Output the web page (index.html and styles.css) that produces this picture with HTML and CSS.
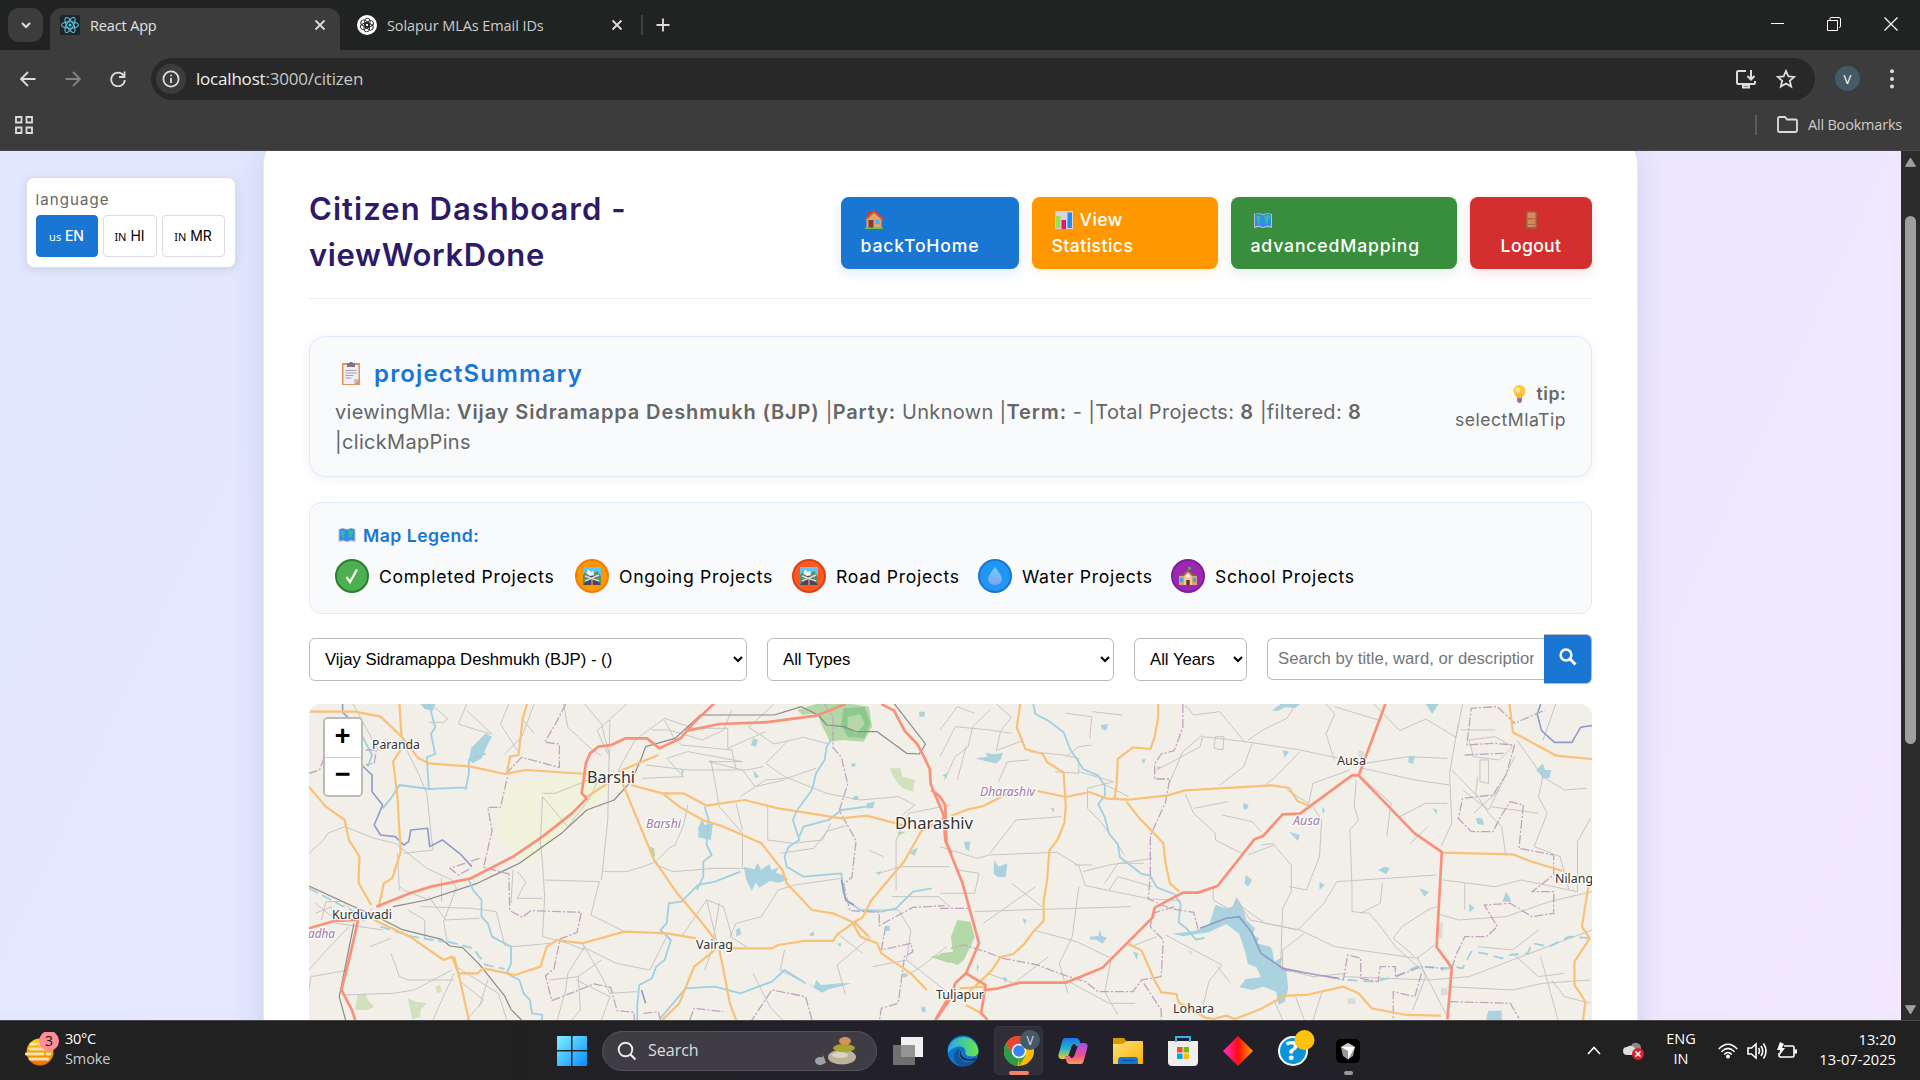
FILE: index.html
```html
<!DOCTYPE html>
<html lang="en">
<head>
<meta charset="utf-8">
<title>React App</title>
<link rel="stylesheet" href="styles.css">
</head>
<body>
<svg class="defs" aria-hidden="true">
  <defs>
    <linearGradient id="win" x1="0" y1="0" x2="1" y2="1"><stop offset="0" stop-color="#7df3fd"/><stop offset="1" stop-color="#0a8bff"/></linearGradient>
    <linearGradient id="sun" x1="0" y1="0" x2="0" y2="1"><stop offset="0" stop-color="#ffd500"/><stop offset="1" stop-color="#f06a00"/></linearGradient>
    <linearGradient id="edgeTop" x1="0" y1="0" x2="1" y2="0"><stop offset="0" stop-color="#28a8e8"/><stop offset="1" stop-color="#68e848"/></linearGradient>
    <linearGradient id="copA" x1="0" y1="0" x2="0" y2="1"><stop offset="0" stop-color="#1c74e8"/><stop offset=".5" stop-color="#22b4c8"/><stop offset="1" stop-color="#f0d030"/></linearGradient>
    <linearGradient id="copB" x1="0" y1="0" x2="0" y2="1"><stop offset="0" stop-color="#a050f0"/><stop offset=".6" stop-color="#f05090"/><stop offset="1" stop-color="#f8a050"/></linearGradient>
    <linearGradient id="dia" x1="0" y1="0" x2="1" y2="0"><stop offset="0" stop-color="#ff30d0"/><stop offset=".5" stop-color="#ff0c10"/><stop offset="1" stop-color="#ffa000"/></linearGradient>
    <linearGradient id="drop" x1="0" y1="0" x2="0" y2="1"><stop offset="0" stop-color="#6fd0fa"/><stop offset="1" stop-color="#7fa0f8"/></linearGradient>
    <linearGradient id="fold" x1="0" y1="0" x2="1" y2="1"><stop offset="0" stop-color="#ffe07a"/><stop offset="1" stop-color="#f8b400"/></linearGradient>
    <symbol id="worldmap" viewBox="0 0 18 16"><path d="M0 1l4.500-1L9 1l4.500-1L18 1v14l-4.500-1L9 15l-4.500-1L0 15z" fill="#c3b6d6"/><path d="M1 1.500l3.500-1L9 2l4.500-1.500L17 1.500v12l-3.500-1L9 14l-4.500-1.500L1 13.500z" fill="#2f8df0"/><path d="M2 3l4 0 1 2-2 2 1 4-2-1-1-4zM10 3l5-1 1 3-2 1v4l-2 1-1-4z" fill="#35c284"/></symbol>
    <symbol id="road" viewBox="0 0 18 18"><path d="M0 0h18v18H0z" fill="#5cc6f5"/><path d="M0 8l5-6 5 5 4-3 4 5v9H0z" fill="#5e8f6a"/><path d="M5 2l3 3 2-1 1 4-4 1-4-3z" fill="#eef6f8"/><path d="M0 18l7-9h4l7 9z" fill="#4a4560"/><path d="M8.500 12h1v6h-1z" fill="#ffca28"/><path d="M2 9l14 5M16 8L2 14" stroke="#ddd" stroke-width="1.400"/></symbol>
  </defs>
</svg>

<header class="browser">
  <div class="tabstrip">
    <button class="tab-search"><svg width="35" height="34" viewBox="0 0 35 34"><path d="M14 15l4 4 4-4" class="ico w2"/></svg></button>
    <div class="tab active">
      <svg class="favicon" width="20" height="20" viewBox="0 0 20 20"><rect width="20" height="20" rx="2" fill="#20232a"/><g fill="none" stroke="#58c4dc" stroke-width="1.100"><ellipse cx="10" cy="10" rx="8.500" ry="3.300"/><ellipse cx="10" cy="10" rx="8.500" ry="3.300" transform="rotate(60 10 10)"/><ellipse cx="10" cy="10" rx="8.500" ry="3.300" transform="rotate(120 10 10)"/></g><circle cx="10" cy="10" r="1.500" fill="#58c4dc"/></svg>
      <span class="tab-title t1">React App</span>
      <svg class="close" width="12" height="12" viewBox="0 0 12 12"><path d="M1.500 1.500l9 9M10.500 1.500l-9 9" class="ico"/></svg>
    </div>
    <div class="tab second">
      <svg class="favicon" width="20" height="20" viewBox="0 0 20 20"><circle cx="10" cy="10" r="10" fill="#fff"/><g fill="none" stroke="#222" stroke-width=".9"><rect x="7.600" y="3.200" width="5.400" height="8.500" rx="2.700"/><rect x="7.600" y="3.200" width="5.400" height="8.500" rx="2.700" transform="rotate(60 10 10)"/><rect x="7.600" y="3.200" width="5.400" height="8.500" rx="2.700" transform="rotate(120 10 10)"/><rect x="7.600" y="3.200" width="5.400" height="8.500" rx="2.700" transform="rotate(180 10 10)"/><rect x="7.600" y="3.200" width="5.400" height="8.500" rx="2.700" transform="rotate(240 10 10)"/><rect x="7.600" y="3.200" width="5.400" height="8.500" rx="2.700" transform="rotate(300 10 10)"/></g></svg>
      <span class="tab-title t2">Solapur MLAs Email IDs</span>
      <svg class="close" width="12" height="12" viewBox="0 0 12 12"><path d="M1.500 1.500l9 9M10.500 1.500l-9 9" class="ico"/></svg>
    </div>
    <span class="tab-sep"></span>
    <svg class="new-tab" width="14" height="14" viewBox="0 0 14 14"><path d="M7 .5v13M.5 7h13" class="ico"/></svg>
    <div class="window-buttons">
      <svg width="14" height="14" viewBox="0 0 14 14"><path d="M1 6.500h13" stroke="#fff"/></svg>
      <svg width="14" height="14" viewBox="0 0 14 14"><path d="M.5 3.500h10v10H.500zM3 3V1.500q0-1 1-1h8q1.500 0 1.500 1.500v7.500q0 1-1.500 1" fill="none" stroke="#fff"/></svg>
      <svg width="14" height="14" viewBox="0 0 14 14"><path d="M.5.500l13 13M13.500.500l-13 13" stroke="#fff" stroke-width="1.200"/></svg>
    </div>
  </div>
  <div class="toolbar">
    <svg class="nav" width="16" height="16" viewBox="0 0 16 16"><path d="M15.500 8H1.500M8 1L1 8l7 7" class="ico"/></svg>
    <svg class="nav dim" width="16" height="16" viewBox="0 0 16 16"><path d="M.5 8h14M8 1l7 7-7 7" class="ico"/></svg>
    <svg class="nav" width="16" height="16" viewBox="0 0 16 16"><path d="M13.500 4.500A6.800 6.800 0 1 0 14.800 9M14.500.500v5.500H9" class="ico"/></svg>
    <div class="omnibox">
      <span class="info"><svg width="18" height="18" viewBox="0 0 18 18"><circle cx="9" cy="9" r="7.600" class="ico"/><path d="M9 8v5M9 4.700v1.600" class="ico"/></svg></span>
      <span class="url">localhost<span>:3000/citizen</span></span>
      <svg class="install" width="22" height="20" viewBox="0 0 22 20"><path d="M11 2H3.200Q2 2 2 3.200v10.600Q2 15 3.200 15h15.600q1.200 0 1.200-1.200V12M16 1v9M12.500 7l3.500 3.500L19.500 7M8 16h6v2.500H8z" class="ico w2"/></svg>
      <svg class="star" width="20" height="20" viewBox="0 0 20 20"><path d="M10 2l2.400 5.400 5.900.5-4.500 3.900 1.400 5.800L10 14.500l-5.200 3.100 1.400-5.800-4.500-3.900 5.900-.5z" class="ico"/></svg>
    </div>
    <span class="avatar">V</span>
    <svg class="kebab" width="4" height="20" viewBox="0 0 4 20"><g fill="#ddd"><circle cx="2" cy="2.200" r="2"/><circle cx="2" cy="10" r="2"/><circle cx="2" cy="17.500" r="2"/></g></svg>
  </div>
  <div class="bookmarks">
    <svg width="18" height="18" viewBox="0 0 18 18"><path d="M1 1h5.500v5.500H1zM11.500 1H17v5.500h-5.500zM1 11.500h5.500V17H1zM11.500 11.500H17V17h-5.500z" class="ico"/></svg>
    <span class="bm-sep"></span>
    <svg width="21" height="17" viewBox="0 0 21 17"><path d="M1 14.500V2.500Q1 1 2.500 1H8l2 2.500h8.500Q20 3.500 20 5v9.500q0 1.500-1.500 1.500h-16Q1 16 1 14.500z" class="ico"/></svg>
    <span class="bm-text">All Bookmarks</span>
  </div>
</header>

<main class="page">
  <aside class="language">
    <div class="language-label">language</div>
    <div class="language-row">
      <button class="lang on"><small>us</small> EN</button>
      <button class="lang hi"><small>IN</small> HI</button>
      <button class="lang mr"><small>IN</small> MR</button>
    </div>
  </aside>

  <section class="dashboard">
    <div class="head">
      <h1><span>Citizen Dashboard -</span><br><span class="h1b">viewWorkDone</span></h1>
      <div class="actions">
        <button class="btn blue"><svg class="emo" width="20" height="19" viewBox="0 0 20 19"><path d="M4 2h3v5H4z" fill="#b34a2e"/><path d="M2.500 8.500L10 2l7.500 6.500V18h-15z" fill="#e3a36d"/><path d="M0 9.500L10 0l10 9.500-1.500 1L10 3 1.500 10.500z" fill="#e64a2f"/><path d="M4.500 10h5v8h-5z" fill="#7a4034"/><path d="M11.500 10h4v4h-4z" fill="#39b6f2"/><path d="M1 17.500h18v1.500H1z" fill="#6cc04a"/></svg><br><span>backToHome</span></button>
        <button class="btn orange-btn"><svg class="emo" width="18" height="18" viewBox="0 0 18 18"><path d="M0 0h18v18H0z" fill="#d9d3e3"/><path d="M1 5h4.500v12H1z" fill="#9be04d"/><path d="M6.500 9H11v9H6.500z" fill="#e0177b"/><path d="M12.500 1.500H17V17h-4.500z" fill="#2489e8"/></svg><span>View</span><br><span>Statistics</span></button>
        <button class="btn green"><svg class="emo" width="18" height="16"><use href="#worldmap"/></svg><br><span>advancedMapping</span></button>
        <button class="btn red-btn"><svg class="emo door" width="11" height="18" viewBox="0 0 11 18"><path d="M0 0h11v18H0z" fill="#a4583e"/><path d="M1.500 1.500h8V16h-8z" fill="#d08a5e"/><path d="M2 7h7v1.500H2zM2 13h7v1H2z" fill="#b86840"/></svg><br><span>Logout</span></button>
      </div>
    </div>

    <div class="summary">
      <div class="summary-main">
        <h2><svg width="18" height="23" viewBox="0 0 18 23"><path d="M0 1h18v22H0z" fill="#dd965c"/><path d="M1.500 3h15v14l-4 5H1.500z" fill="#f1edf6"/><path d="M12 22v-5h5z" fill="#c8bfd8"/><path d="M5 1h2q2-2.500 4 0h2v4H5z" fill="#7d7488"/><path d="M3.500 8.500h11M3.500 11h11M3.500 13.500h8M3.500 16h6" stroke="#a79bb5"/></svg><span>projectSummary</span></h2>
        <p>viewingMla: <b>Vijay Sidramappa Deshmukh (BJP)</b> |<b>Party:</b> Unknown |<b>Term:</b> - |Total Projects: <b>8</b> |filtered: <b>8</b><br>|clickMapPins</p>
      </div>
      <div class="tip">
        <div><svg width="13" height="18" viewBox="0 0 13 18"><circle cx="6.500" cy="6" r="6" fill="#ffc83d"/><path d="M2 9h9l-2 4H4z" fill="#ffb42e"/><circle cx="5" cy="5" r="2.500" fill="#ffe79a"/><path d="M4 13h5v3l-1.500 2h-2L4 16z" fill="#98769c"/></svg><b>tip:</b></div>
        <div>selectMlaTip</div>
      </div>
    </div>

    <div class="legend">
      <div class="legend-title"><svg width="18" height="15"><use href="#worldmap"/></svg><span>Map Legend:</span></div>
      <div class="legend-row">
        <div class="key"><i class="dot done"><svg width="14" height="16" viewBox="0 0 14 16"><path d="M1.500 9l3.500 5L12 1.500" fill="none" stroke="#fff" stroke-width="2.200"/></svg></i><span class="k1">Completed Projects</span></div>
        <div class="key"><i class="dot ongoing"><svg width="18" height="18"><use href="#road"/></svg></i><span class="k2">Ongoing Projects</span></div>
        <div class="key"><i class="dot roads"><svg width="18" height="18"><use href="#road"/></svg></i><span class="k3">Road Projects</span></div>
        <div class="key"><i class="dot water"><svg width="14" height="18" viewBox="0 0 14 18"><path d="M7 0Q14 9 14 12a7 6 0 0 1-14 0Q0 9 7 0z" fill="url(#drop)"/></svg></i><span class="k4">Water Projects</span></div>
        <div class="key"><i class="dot school"><svg width="18" height="18" viewBox="0 0 18 18"><path d="M9 0h3v2.500H9.500V5H9z" fill="#43b84c"/><path d="M0 9h18v9H0z" fill="#d9a273"/><path d="M5 7l4-4 4 4v11H5z" fill="#f6c794"/><path d="M0 9l2-2h3l4-4.500L13 7h3l2 2h-5L9 5 5 9z" fill="#8d5b52"/><path d="M1 11h3v4H1zM14 11h3v4h-3z" fill="#39a6e8"/><path d="M7.300 13h3.400v5H7.300z" fill="#59393c"/><circle cx="9" cy="9" r="1.500" fill="#fff"/></svg></i><span class="k5">School Projects</span></div>
      </div>
    </div>

    <div class="filters">
      <select class="f-mla"><option>Vijay Sidramappa Deshmukh (BJP) - ()</option></select>
      <select class="f-type"><option>All Types</option></select>
      <select class="f-year"><option>All Years</option></select>
      <div class="search"><input type="text" placeholder="Search by title, ward, or description"><button><svg width="18" height="18" viewBox="0 0 18 18"><circle cx="7" cy="7" r="5.400" fill="none" stroke="#fff" stroke-width="2.500"/><path d="M11 11l5.500 5.500" stroke="#fff" stroke-width="2.900"/></svg></button></div>
    </div>

    <div class="map">
      <svg class="tiles" width="1283" height="316" viewBox="0 0 1283 316">
        <rect width="1283" height="316" fill="#f2efe9"/>
        <g class="layer" transform="translate(-19 -14) scale(.4209 .3333)">
          <path class="sand" d="M498 288L700 250 760 300 710 370 640 440 590 510 560 520 490 430z"/>
          <path class="wood" d="M1205 60l50-20h70l50 10 8 60-20 45-50-5-30 5-20-50-10-35-35 5z"/>
          <path class="wood2" d="M1315 55l50-5 14 50-14 45-40-5-15-35z"/><path class="wood" d="M1325 80l30-8 10 30-20 30-20-20z"/>
          <path class="park" d="M1425 235l25 0 5 25 30 10-5 35-25-10-20-30zM160 915l20-5 5 20 15 20-15 10-30 0zM280 925l20 10 25 5-15 20 0 22-20 5-5-30zM345 890l12-5 3 20-10 5z"/>
          <path class="wood" d="M1520 800l48-12v32zM855 470l10 5 3 25-10-5zM1442 425h22l-15 10z"/>
          <path class="lake" d="M310 42h35l-5 20-20-5zM465 130l15 10-15 35-10 30-20 15-10-10 5-35 15-20zM1100 145l12 5-5 20-12-5zM930 235l6 10-5 15zM1100 240l15 20-10 5zM980 385l5 20 20-5-5 50-30-8 0-30zM1078 530l25 8 8-20 8 22 20-18 5 18 18-8-8 16 18 8 12 14-24 8-20-5-25 20-8-15-10 25-12-30zM1060 720l8-8 4 20-12 8zM1230 880l15 10 5-20 12 15 45-5 28 0-30 10-25 8-15 10-15-10zM1370 340l20-5-5 20-15 0zM1480 480l12-8-8 25-12-8zM1495 65l14 0-2 15-12 0zM1335 220l8 0 0 10-10 0zM1340 318l10 0 0 12-12 0zM1300 760l10 0-3 12zM1235 730l10-5 0 12-10 0zM1500 950l10 0 0 18-10-4zM1390 548l15-5-5 12zM1415 708l10 0 0 15-10 0zM1455 850l10 0 0 12-10 0z"/>
          <path class="minor" d="M150 42l60 140 50-30M45 490l35-40 10-20 40-20 70 35 50 15 75 75 60 35 10 25-30 100 10 70M265 150l40 100 20 60 10 120 5 50-70 10M335 42l40 45-10 10h-35M420 42l-20 60 50 20 30 10-60-70M520 42l-20 60 40 80M550 85l30 45M580 42l-30 100-40 50M650 42l10 70 60 70 20 15M700 42l40 60 20 100M800 42l-70 80 25 70M780 240l40-90 70-65 70 30 80 0 0 60 90-50M860 120l40 0 80 30 50-30 20-60M890 90l20 50 20 25 120 15 10 60M835 265l100-5-40-55 50-20 130 30-80 0 80 25 30 50 70-20M845 225l100 15 140 0 40-10M600 310l30 0 80-40 30-10M600 320l60 90 50-80 30-80M600 320l-5 140 5 60 5 100-5 120 60 20 40 20M605 570l130 5-20 100 80 50M745 545l55 0 50-20 20-10 30-40 15-10 20-60 10-60M740 570l5-60 10-120 5-300M870 525l40 20 100-10 70 0M1000 210l20 140 55 80 0 100M1070 320l60-50 50-5 70-30M1060 340l15 80M1150 42l-60 70 60 50 70-20 60 20M1185 150l-55 70 45 40 100 50 80 20 90-10 40 25-30 30M1135 350l0 100 60 10 70-10 20-50M1165 490l80-15 30-50 50-20M1310 565l-110 20-40 15-40 80-60 20-15 40 40 30M1015 760l-25-130 40 20 20 90M990 630l-60 110M700 770l-40 80-5 50-20 90M695 770l80 50 80 20 40-100M695 760l50 110 15 40 65-5M615 870l70-10 55-50M685 860l5 100-20 30M680 870l80 50-20 70M620 760l-90 10-20-5-20-100-60-10-120-5M330 630l-60-30-10-10M280 660l40 30 0 55M330 620l40 70 80-5M360 565l0 70M255 490l5 110M530 540l-5 100M540 545l20 30-20 50 60 0M75 690l10-55 40 0 50 60 20-40M60 640l40 40 10 20 110 20M60 670l40-20M140 710l-60 80-35 50M140 840l-90 20-5 40M240 790l20 70 20 10 110 0M190 770l50-25M385 840l-90 60-50 10-120 5M390 850l-40 110-10 30M400 870l60 60-40 60M395 830l100 80 20 80M470 870l-20 80M1100 850l40 100 30 40M1175 780l-10 60 60 40M1440 600l0-150 30-80 98-25M1430 620l110 0 28 30M1400 550l50-20 118 0M1410 500l-35-20M1365 660l80 0 30 60-10 90-80 20M1465 810l100 100M1300 730l60 60M1380 740l-80 85 20 90M1560 770l-60 60-40 30M1020 640l-20 150-15 50"/>
          <path class="rail" d="M45 588l120 70 30 15 70 45 95 30 20 20 30 5 40 50 60 95 15 40 25 32M152 700l-35 220 15 70M245 650l80-20 120-50 100-60 100-90 60-70 65-30 40-55 25-70 10-35 70-25 60-70h175l65-25 40 25 20 30 40 5 30 15 50 0 70 65 30 2 15-30-80-130"/>
          <path class="river" d="M45 595l75 50 65 40M215 710l75 30 75 15M375 755l60 20 30 50 45 12" stroke-dasharray="10 5"/>
          <path class="river" d="M170 135l25 60-10 35M330 42l15 70-10 20 10 60-20 10 5 95 90-5-90 5-70-12-20 40-20 30M465 190l-40 20 0 40-8 50M425 570l10 30 20 30 0 50 15 20 10 40 45 30 0 50-10 30 30 20 10 40 15 20 5 40 25 5-5 35M1070 545l-60 30-40 10-40 50-30 5-5 60-15 20 25 30-15 60-20 20-10 35-30 20-5 60 0 70M985 350l10 40-5 50 0 25 12 30-20 20 0 45-15 40M1285 150l-10 20-5 40-20 40-10 50-35 60-10 30 15 60-25 20-10 30 5 30 40 30 90-10 5 60M1210 440l10-30 60-20 30-30 60-10M880 985l60-90 70-5 60 20 75-35 30-35 50 40M1320 630l35 30 50 5 35-10 40-50 45-10"/>
          <path class="riverb" d="M125 42v25l17 20M170 225l25 30 0 50 25 40-20 60 15 30 35 5 20 25 12-10 5-35 40-5 5 55 30-20 45 45 25 35M1310 570l10 60 20 15M835 900l10 40"/>
          <path class="border" d="M655 42l-20 50-30 65 35 5 0 70-90-30-30 40-20 110-30 0 10 70-20 110 60 20 2 110 30 20 20-20 120 5-10 60-40 20-15 90-20 20 15 75 60-30 40-20 40 10 15 70 40 5 5 90M45 250l25-10 15-50M180 180l25 0-5 40-20 5M450 505l-70 30 20 20 30-20M1270 42l20 40 0 90 20 30 15 80-20 80 40 90-10 110-20 20 15 80 70 5 0 40 80-55 75-5M1415 710l-10 70 70-20 5 25-20 15-15 140-40 15-5 40M1240 990l-15-70-80-20-50 95M840 970l35-5 5 25M950 990l10-35 70 10"/>
          <path class="trunk" d="M45 65h110l60 15 50 60-5-98M265 140l40 65 25 15 100 10 80 22 50-12 145 12M515 250l8-50 20-5 10-110 10-43M265 175l-20 40 10 100 8 170-20 80-20 15-12 70M45 290l40 60 45 40 10 60 25 50-2 80 30 65M200 690l85 50 80 70 20-10 15 50 45 0 15-15 75 20 60-25 15-60 25-20 60 10 100-35 100 5 70 15M700 325l55-45M780 245l95-50M790 280l75 230 55 100 60 90 30 50M810 285l75 25 50 0 55 37 90-17 80 25 150 30 60-8 90 30M885 310l40 40 55 40 50 20 90 50 50 80 10 40 60 80 50 10 45 25 20 45 40 20 10 30 70 60 38 50M390 800l12 60 23 130M1010 780l-50 50-35 110-40 50M1020 780l10 60 15 100 15 50M1050 775h95l15-10 60-12h70l10-20 45-40 15-10 20-50 40-60 40-60 40-90 28-20"/>
          <path class="trunk" d="M1340 695l35 45"/>
          <path class="motor" d="M45 715l60-22M205 650l80-40 50-20 95-25 100-65 70-60 70-70 35-45-12-15 10-90 10-30 20-20 30-5 35-20h50l30 30 50-30 30-45 50-60 10-45M945 122l75-20 110-5 120-20 70-35M1405 42l30 20 25 60 30 40 15 35 15 40 2 45 30 90 5 80 15 40M100 693l62-3-20 110-20 100 25 60 8 30M1533 990l35-75"/>
        </g>
        <g class="layer" transform="translate(631 -14) scale(.4337 .3333)">
          <path class="wood" d="M40 690l30 5 10 45-10 30-15 40-15 15-40-20v-15l30-5-5-45zM85 820l5 10-5 20z"/>
          <path class="lake" d="M765 62l20-20h45l-10 12-25-2-15 10zM1120 42h30l-15 30zM80 205l30-5-5-12 20 5 20-5-5 20-10 12-15-3zM370 105l18-3-5 20-10-5zM790 180l15 5-10 18zM1080 200l15 0-5 22-10-5zM1375 240l15-20 5 20 15 0-5 25-15 0-5-10zM465 210l10-5-5 18zM500 230h10l-8 10zM700 340l12 5-5 15-8-5zM805 425l25 10-5 18zM1235 385l15 0 5 20-15-2zM1135 355l12 5-2 12zM125 510l10 20 20-10-3 40-18 2-10-10zM1010 540l15-10 12 5-8 18zM705 555l15 15-10 20-8-10zM875 575l12 10-12 15zM1105 595l22 10-10 15zM1305 605l8 15 4 15-20 0zM1220 640l12 14-12 14zM345 740l20-2 3-20 5 20 12 5-10 18-15-12-12 0zM445 785l12 5-3 20zM1260 980l5-18 30 0 0 28h-35zM55 455l15 0-3 28-8-5zM635 645l25 10 15-5 8-30 15 30 8 40 20 25-5 20 15 10-5 15 30 10 5 10 5 35 20-15-8 25 15 10 5 60-8 40-15 10-5-40-30-15-25 10-30-8 15-25 35-5-10-30-20-10-5-30-15-60-30-30-40 25-60 12-25-8 50-8 35-15zM190 685l10 5-5 15zM5 255l12-5-2 15zM255 355l8 0 0 15zM145 860l10 5-5 15zM880 350l8 10-5 12z"/>
          <path class="urban" d="M965 180l12 5 0 30-12-5zM1145 700l15 0-3 45-15-3zM1155 895l15 0 0 20-15 0zM940 925l18 0 0 18-18 0zM570 780l12 5-3 12z"/>
          <path class="minor" d="M0 120l40-70 40 20M0 200l35-90 80 10 50 10M10 270l25-70 30-30 10-60 40-50M60 170l-20 100M130 42l35 40-25 40-10 60 60-30M135 275l20-60 50-5M205 185l80 10 35 10 0 45-55-5M290 200l30-30 30-5M345 145l5-65-60-10M350 65l70 10M320 245l80 30-60 20 0 60 30 40 35 60 20 40M375 280l60 40M500 240l100-70 5-30 100 15 125 25 90 25M705 160l-60-95-60 10-20-30M605 135l-45 50-30 90M635 140l20 0-3 40-20-5zM710 150l35-30 55-35 20-43M720 160l-20 70-55 55M890 42l20 30-20 60 20 80M910 50l100 40M830 185l-60 80-20 20M565 310l20 60 50 60 0 20 60 40M585 355l80-20M650 375l70 20 20 30M710 495l60-30 40 60 0 80-20 50-5 190M740 465l30-5M800 300l50 40 10-60 85-40M860 350l20 40-5 110-30 100-40-10M960 270l-5 80 10 40-20 30 5 170 0 75 40 5 20 30 40 70 60 70M970 260l70 80-10 100M975 235l120 35 80 15M980 220l100-20 90 5M1000 42l60 80 60-35 70 55 15-100M1195 100l-20 150 5 150-25 70M1060 380l60-40 50 0M1085 460l40-50M825 720l60-80 30-65 230-20M825 720l-110-30-30-60-15 30-40-30 0-40M690 645l60 55 80 20 80 50 190 35 40-40M970 670l45-30 5-60M1095 800l-50-55 20-35 60-50 20-10M1145 670l50 20 110-10 100-45 98-30M1160 570l120 20 60-20 130 35 0-150 30-70M1210 580l0 80M1330 150l60 110-10 60 20 50-30 100 60 30 20 100M1390 260l50 40 50-5M1240 260l-5 50 30 60 30 40 10 90M1230 200l60 10 30-40-40-30-60 10zM1245 210l20 0 0 70-20-5zM1205 300l60 60 60-160M1180 240l60 80M1290 300l-60 70M1380 370l-110-20M1420 42l-30 110M1200 120l80 0M0 470l85 35 30-10 155-8 50 40 15 60 150 40 70 5M115 490l60-100 105-10M310 525l40 0M330 545l60-20 100-20M380 580l30-60 60 0M390 600l20-40 80 30M0 610l80 0 10-60-50-10M80 665l110-5 250-10M100 700l120-110M320 590l-15 150-30 80 20 90M235 650l-70-70M215 720l100 35 80 50-15 100 30 70M250 800l-80 80-60-30M290 870l100 70 60 0M520 735l130 90-30 50-15 80M640 830l30 50M500 740l-60 30M790 840l0-60 50-50M800 840l60 20 80-10M770 930l20 60M820 920l20 70M880 910l-20 80M930 860l200 10 90-10 100-50 183-90M1100 800l20 60-30 100M1110 830l60 150M1170 890l150 10 70-20 110-10M1320 790l60 70 60-10M1380 720l-60 60-80-10M1385 800l40 190M1410 870l30 50 60 20"/>
          <path class="river" d="M215 42l5 30 30 20 35 35 15 50 30 60 35 20 15 30 0 30-15 25 15 40 10 50 20 30 5 40 50 50 20 5 15 35 40 20 15 30-5 55 20 20 20 32 20-5"/>
          <path class="river" d="M1155 840l30-10 20 5 20-50 30 5 40 15 20-10 40-5 10-30 40 10 45-30 53 5M940 870l60 5 50-15 50-30 80 5" stroke-dasharray="10 6"/>
          <path class="riverb" d="M1385 42l-8 30 10 50 30 35 40 0 20-45 26-5M600 715l60-30 30-5 30 50 20 60 50 45 80 20 50 10"/>
          <path class="border" d="M560 42l0 70-20 70-30 10-15 30 0 45h35l-10 70-35 100 0 120-5 70 55 30 50 10 10 50M540 650l-50 20-5 40 30 40-5 110-45 10-20 35-80 0-30-30-50-20-60-30-80-20-40-20-50-20-30 10M470 880l40 80 0 30M0 655h70M790 840l60 10 80 20 10-75 30 10 0 60 40 10 5-45 35 0 0 30 60-30 50 5M1180 835l10-40 20-55 50 0 25-30-30-65 60-5 50 40 50-10 0-65-50 0 50-50 0-60-80-20 10-130-30-10-20 40-20 50-50 0-30-40 10-60 70-10 30-60 20-90-50-5-60 5 10-110 60-5 40 50 70-40M1210 195l90-5M1110 850l-15 70-50-15 0 80M1175 935l140 5 20 45"/>
          <path class="trunk" d="M185 42l-8 70 20 65 40 15 10 25 38 30 5 100-3 50-15 50-20 35-5 90-8 60 0 60-25 35-20 35-25 30-30 10-20 40-65 80M25 378l40-20 35-10 60-40M225 303l65 18 55-15 40 20 50 3 90-13 40-15 200-15 40 8 20 40 30 15M503 42l0 40-8 60-10 35-40-5-35 35-3 80-5 38M430 335l30 50 30 40 25 35 5 60 10 60 22 25M435 762l30 20 30 90 15 35 35 5 5 25 60 45 20 5 30-10 20 10 60-30 55-40 50-2 85-25 35 20 30 45 80 20 80 2M1313 42l8 85 100 70 82 10M1155 488l165 5 40 20 75 30M1495 590l-15 120 18 35-35 70 0 70 25 50-5 55M45 895l60-5M60 945l35 25"/>
          <path class="motor" d="M-20 300l20 20 12 25 3 115 37 120 38 180-30 90 45 35-10 85 15 20M60 850l-25 30-10 45-35 65M105 900l30-5 50-17 105 0 85-45 115-150 5-30 65-45 35 0 45-20 85-140 20-10 45-65 40-2 120-115h15l130 175 62 55-12 285 35 62-10 155M965 258l62-216"/>
        </g>
        <g class="labels">
          <text x="63" y="45" textLength="48" lengthAdjust="spacingAndGlyphs" class="town">Paranda</text>
          <text x="278" y="79" textLength="48" lengthAdjust="spacingAndGlyphs" class="city">Barshi</text>
          <text x="337" y="124" textLength="35" lengthAdjust="spacingAndGlyphs" class="area">Barshi</text>
          <text x="586" y="125" textLength="78" lengthAdjust="spacingAndGlyphs" class="city">Dharashiv</text>
          <text x="671" y="92" textLength="55" lengthAdjust="spacingAndGlyphs" class="area">Dharashiv</text>
          <text x="23" y="215" textLength="60" lengthAdjust="spacingAndGlyphs" class="town">Kurduvadi</text>
          <text x="-1" y="234" textLength="27" lengthAdjust="spacingAndGlyphs" class="area">adha</text>
          <text x="387" y="245" textLength="37" lengthAdjust="spacingAndGlyphs" class="town">Vairag</text>
          <text x="627" y="295" textLength="48" lengthAdjust="spacingAndGlyphs" class="town">Tuljapur</text>
          <text x="864" y="309" textLength="41" lengthAdjust="spacingAndGlyphs" class="town">Lohara</text>
          <text x="1028" y="61" textLength="29" lengthAdjust="spacingAndGlyphs" class="town">Ausa</text>
          <text x="984" y="121" textLength="27" lengthAdjust="spacingAndGlyphs" class="area">Ausa</text>
          <text x="1246" y="179" textLength="38" lengthAdjust="spacingAndGlyphs" class="town">Nilang</text>
        </g>
      </svg>
      <div class="zoom"><button>+</button><button>−</button></div>
    </div>
  </section>

  <div class="scrollbar">
    <svg width="11" height="10" viewBox="0 0 11 10"><path d="M5.500 1L10.500 9.300H.500z" fill="#9f9f9f" stroke="#9f9f9f" stroke-linejoin="round"/></svg>
    <span class="thumb"></span>
    <svg class="down" width="11" height="10" viewBox="0 0 11 10"><path d="M5.500 9L.500 .700h10z" fill="#9f9f9f" stroke="#9f9f9f" stroke-linejoin="round"/></svg>
  </div>
</main>

<footer class="taskbar">
  <div class="weather">
    <svg width="36" height="36" viewBox="0 0 36 36"><circle cx="15" cy="20" r="13.500" fill="url(#sun)"/><path d="M6 12h5M14 12h4M5 17h15M1 22h17M22 22h3M5 27h18" stroke="#f8e2b0" stroke-width="2.800" stroke-linecap="round"/><circle cx="24" cy="9" r="10" fill="#ff8c99"/><text x="24" y="14" text-anchor="middle" class="count">3</text></svg>
    <div class="two"><span class="temp">30°C</span><span class="smoke">Smoke</span></div>
  </div>
  <svg class="start" width="30" height="30" viewBox="0 0 30 30"><path d="M1 0h13v14H0V1q0-1 1-1zM15.500 0H29q1 0 1 1v13H15.500zM0 15.500h14V30H1q-1 0-1-1zM15.500 15.500H30V29q0 1-1 1H15.500z" fill="url(#win)"/></svg>
  <div class="tb-search">
    <svg width="20" height="20" viewBox="0 0 20 20"><circle cx="8.500" cy="8.500" r="6.800" fill="none" stroke="#eee" stroke-width="1.900"/><path d="M13.500 13.500l5 5" stroke="#eee" stroke-width="2.200"/></svg>
    <span>Search</span>
    <svg class="stones" width="42" height="28" viewBox="0 0 42 28"><ellipse cx="27" cy="20" rx="14" ry="7.500" fill="#bdb39c"/><ellipse cx="29" cy="11" rx="11" ry="4" fill="#a8a52c"/><ellipse cx="30" cy="4" rx="6" ry="4" fill="#d3935a"/><ellipse cx="25" cy="18" rx="8" ry="3" fill="#dcd4c2"/><path d="M8 18l3 8-5 1z" fill="#dba24a"/><ellipse cx="5" cy="24" rx="5" ry="4" fill="#9ea3aa"/></svg>
  </div>
  <div class="apps">
    <span><svg width="30" height="28" viewBox="0 0 30 28"><path d="M8 0h22v20H8z" fill="#f0f0f0"/><path d="M0 8h22v20H0z" fill="#808080" opacity=".82"/></svg></span>
    <span><svg width="32" height="32" viewBox="0 0 32 32"><circle cx="16" cy="16" r="15.500" fill="#0c75cf"/><path d="M1 14A15.500 15.500 0 0 1 31.500 16q0 5-6 5.500-6 0-7-3 1-6-5-7Q6 11 1 18z" fill="url(#edgeTop)"/><path d="M13 14q-4 9 5 13 5 1 11-2-5 7-14 6-9-2-8-11 1-6 6-6z" fill="#12539d"/><path d="M17 13q-5 3-2 8 4 5 14 2l-1 2q-8 2-13-1-5-6 2-11z" fill="#20202a"/></svg></span>
    <span class="current"><svg width="50" height="50" viewBox="0 0 50 50"><circle cx="25" cy="25" r="15" fill="#fbbc05"/><path d="M12 17.500L19 29l6 3-1.500 8A15 15 0 0 1 12 17.500z" fill="#2a9d4a"/><path d="M25 18h13.200A15 15 0 0 0 12 17.500L19 29z" fill="#ea4335"/><path d="M25 40l7-11-7 3z" fill="#34a853"/><circle cx="25" cy="25" r="7.300" fill="#fff"/><circle cx="25" cy="25" r="5.800" fill="#3b82f0"/><circle cx="36" cy="14" r="10" fill="#445b66"/><text x="36" y="18.500" text-anchor="middle" class="vbadge">V</text></svg></span>
    <span><svg width="30" height="28" viewBox="0 0 30 28"><path d="M7 1h11q3 0 4 4l1 4h-5l-1-2q-3 0-4 4l-3 9q-1 2-4 2H4q-5 0-3-6l3-11q1-4 3-4z" fill="url(#copA)"/><path d="M23 27H12q-3 0-4-4l-1-4h5l1 2q3 0 4-4l3-9q1-2 4-2h2q5 0 3 6l-3 11q-1 4-3 4z" fill="url(#copB)"/></svg></span>
    <span><svg width="30" height="28" viewBox="0 0 30 28"><path d="M0 1h11l3 4h16v6H0z" fill="#d99a00"/><path d="M0 7h10l4-3h15q1 0 1 1v22H0z" fill="url(#fold)"/><path d="M5 27v-4q0-3 3-3h14q3 0 3 3v4z" fill="#0f78cf"/><path d="M9 23.500h13" stroke="#0c4f96"/></svg></span>
    <span><svg width="30" height="30" viewBox="0 0 30 30"><path d="M0 5h30v21q0 4-4 4H4q-4 0-4-4z" fill="#eee"/><path d="M8 6V1h14v5" fill="none" stroke="#30b5f0" stroke-width="2"/><path d="M9 11h5.500v5.500H9z" fill="#f25022"/><path d="M15.500 11H21v5.500h-5.500z" fill="#7fba00"/><path d="M9 17.500h5.500V23H9z" fill="#00a4ef"/><path d="M15.500 17.500H21V23h-5.500z" fill="#ffb900"/></svg></span>
    <span><svg width="30" height="30" viewBox="0 0 30 30"><path d="M15 0l15 15-15 15L0 15z" fill="url(#dia)"/></svg></span>
    <span><svg width="49" height="50" viewBox="0 0 49 50"><circle cx="24" cy="25" r="14" fill="#0d94d8" stroke="#fff" stroke-width="2"/><text x="23" y="34" text-anchor="middle" class="help">?</text><circle cx="35.500" cy="14" r="10" fill="#ffc20e"/></svg></span>
    <span class="running"><svg width="24" height="24" viewBox="0 0 24 24"><rect width="24" height="24" rx="5" fill="#000"/><path d="M12 4l7 4-2 9-5 3.500L7 17 5 8z" fill="#999"/><path d="M12 4l7 4H5z" fill="#ccc"/><path d="M5 8h14l-7 12.500V12z" fill="#fff"/></svg></span>
  </div>
  <div class="tray">
    <svg class="caret" width="14" height="9" viewBox="0 0 14 9"><path d="M1 8l6-6.500L13 8" class="ico w"/></svg>
    <svg class="cloud" width="22" height="20" viewBox="0 0 22 20"><path d="M8 5q2-4 6-3 4 1 4 5v6H8z" fill="#888"/><path d="M4 14a4 4 0 0 1 0-8q4-3 8 1l2 7z" fill="#ddd"/><circle cx="15" cy="13" r="6" fill="#d92330"/><path d="M12.500 10.500l5 5M17.500 10.500l-5 5" stroke="#fff" stroke-width="1.600"/></svg>
    <div class="two lang-tray"><span>ENG</span><span>IN</span></div>
    <svg class="wifi" width="20" height="16" viewBox="0 0 20 16"><path d="M.8 6q9.200-9.500 18.400 0M3.500 8.800q6.500-6.800 13 0M6.200 11.500q3.800-4 7.600 0" class="ico w"/><circle cx="10" cy="13.500" r="2" fill="#fff"/></svg>
    <svg class="vol" width="21" height="18" viewBox="0 0 21 18"><path d="M1 6h3.500L9 2v14l-4.500-4H1zM11.500 6q2 3 0 6M14 4q3.500 5 0 10M16.500 1.500q5 7.500 0 15" class="ico w"/></svg>
    <svg class="bat" width="21" height="18" viewBox="0 0 21 18"><path d="M7 4h8.500Q17 4 17 5.500v8q0 1.500-1.500 1.500h-12Q2 15 2 13.500V11" class="ico w"/><path d="M17.500 7.500H20v4h-2.500z" fill="#fff"/><path d="M3 0L0 8h3l-1 6 6-8H5l2-4z" fill="#fff"/></svg>
    <div class="two clock"><span class="time">13:20</span><span class="date">13-07-2025</span></div>
  </div>
</footer>
</body>
</html>
```
FILE: styles.css
```css
* { box-sizing: border-box; }
body {
  margin: 0; width: 1920px; height: 1080px; overflow: hidden;
  display: flex; flex-direction: column;
  font-family: Inter, "Noto Sans", sans-serif;
}
svg { display: block; flex: none; }
button { font-family: inherit; border: 0; margin: 0; padding: 0; }
.defs { position: absolute; width: 0; height: 0; }
.ico { fill: none; stroke: #ddd; stroke-width: 1.8; }
.w2 { stroke-width: 2; }
.w { stroke: #fff; stroke-width: 1.6; }

/* browser chrome */
.browser { height: 151px; flex: none; background: #3c3c3c; border-bottom: 1px solid #4a4a4a; font-family: "Open Sans", "Noto Sans", sans-serif; color: #e3e3e3; }
.tabstrip { height: 50px; background: #202322; display: flex; align-items: flex-start; padding: 8px 22px 0 8px; }
.tab-search { width: 35px; height: 34px; border-radius: 11px; background: #3c3c3c; }
.tab { display: flex; align-items: center; height: 42px; padding-bottom: 8px; }
.tab.active { width: 290px; margin-left: 7px; padding-left: 10px; padding-right: 14px; background: #3c3c3c; border-radius: 12px 12px 0 0; }
.tab.second { width: 301px; padding-left: 17px; padding-right: 18px; }
.tab-title { margin-left: 10px; font-size: 14.500px; flex: 1; white-space: nowrap; }
.t1 { letter-spacing: -.15px; }
.t2 { letter-spacing: -.08px; color: #ccc; }
.tab-sep { width: 2px; height: 20px; background: #424544; margin-top: 7px; }
.new-tab { margin: 10px 0 0 13px; }
.window-buttons { margin-left: auto; display: flex; gap: 43px; padding-top: 9px; }
.toolbar { height: 57px; display: flex; align-items: center; padding-left: 20px; }
.nav { margin-right: 29px; }
.nav + .nav + .nav { margin-right: 28px; }
.nav.dim { opacity: .45; }
.omnibox { width: 1664px; height: 42px; border-radius: 21px; background: #282828; display: flex; align-items: center; padding: 0 19px 0 5px; margin-left: -3px; }
.info { width: 30px; height: 30px; border-radius: 50%; background: #3c3c3c; display: grid; place-items: center; }
.url { margin-left: 10px; font-size: 17px; letter-spacing: -.2px; color: #f0f0f0; }
.url span { color: #c7c7c7; }
.install { margin-left: auto; }
.star { margin-left: 19px; }
.avatar { width: 25px; height: 25px; border-radius: 50%; background: #455a64; margin-left: 20px; font-size: 13px; display: grid; place-items: center; color: #fff; }
.kebab { margin-left: 30px; }
.bookmarks { height: 35px; display: flex; align-items: center; padding: 0 18px 0 15px; }
.bm-sep { width: 2px; height: 20px; background: #5c5c5c; margin-left: auto; margin-right: 20px; }
.bm-text { margin-left: 10px; width: 94px; font-size: 14.500px; letter-spacing: -.2px; white-space: nowrap; color: #ccc; padding-bottom: 1px; }

/* page */
.page { position: relative; flex: 1; min-height: 0; overflow: hidden; display: flex; background: linear-gradient(115deg, #e0e7ff 0%, #f3e8ff 110%); }
.language { position: absolute; left: 25.500px; top: 25.500px; width: 210px; height: 91px; background: #fff; border: 1px solid #dcdde4; border-radius: 8px; padding: 9px; box-shadow: 0 2px 10px rgba(0,0,0,.1); }
.language-label { font-size: 15px; line-height: 25px; height: 28px; color: #666; letter-spacing: 1.1px; }
.language-row { display: flex; gap: 5px; }
.lang { height: 42px; border: 1px solid #ddd; border-radius: 4px; background: #fff; font-size: 14px; color: #000; white-space: nowrap; }
.lang small { font: 11px "Noto Sans", sans-serif; }
.lang.on { width: 62px; background: #1976d2; border-color: #1976d2; color: #fff; font-weight: 500; }
.lang.hi { width: 54px; } .lang.mr { width: 63px; }
.dashboard { margin: -14px 0 0 263px; width: 1375px; height: 1000px; flex: none; padding: 49px 45px 0; background: #fff; border: 1px solid #e0e7ff; border-radius: 26px; box-shadow: 0 8px 32px rgba(60,60,120,.14); }
.head { display: flex; justify-content: space-between; align-items: center; height: 112px; padding-bottom: 19px; border-bottom: 1px solid #eee; }
h1 { margin: -2px 0 0; font-size: 31px; line-height: 46px; font-weight: 600; color: #2d1b69; letter-spacing: 1.05px; white-space: nowrap; }
.h1b { letter-spacing: .65px; }
.actions { display: flex; gap: 13px; }
.btn { height: 72px; border-radius: 8px; color: #fff; font-size: 17.600px; line-height: 26px; font-weight: 500; letter-spacing: .85px; text-align: left; padding: 0 19.500px; white-space: nowrap; }
.btn .emo { display: inline-block; vertical-align: -3px; margin: 0 7px 0 3px; }
.blue { width: 178px; background: #1976d2; box-shadow: 0 4px 12px rgba(25,118,210,.15); }
.orange-btn { width: 186px; background: #ff9800; box-shadow: 0 4px 12px rgba(255,152,0,.15); letter-spacing: .45px; }
.green { width: 226px; background: #388e3c; box-shadow: 0 4px 12px rgba(56,142,60,.15); }
.red-btn { width: 122px; background: #d32f2f; box-shadow: 0 4px 12px rgba(211,47,47,.15); text-align: center; letter-spacing: .35px; }
.btn .door { margin: 0; }
.summary { height: 141px; margin-top: 37px; padding: 0 25px; border: 1px solid #e0e7ff; border-radius: 16px; background: #f8fafc; box-shadow: 0 2px 12px rgba(0,0,0,.06); display: flex; justify-content: space-between; align-items: center; color: #666; }
h2 { margin: 0; display: flex; align-items: center; padding-left: 7px; gap: 14px; font-size: 24px; line-height: 34px; font-weight: 600; letter-spacing: 1.15px; color: #1976d2; }
.summary p { margin: 6px 0 0; font-size: 20px; line-height: 30px; letter-spacing: .32px; white-space: nowrap; }
.summary b { font-weight: 600; }
.summary p b { letter-spacing: .88px; }
.tip { font-size: 17.600px; line-height: 26px; letter-spacing: .5px; text-align: right; }
.tip div { display: flex; justify-content: flex-end; align-items: center; gap: 11px; }
.legend { height: 112px; margin-top: 25px; padding: 19px 25px 0; border: 1px solid #e0e7ff; border-radius: 12px; background: #f8fafc; }
.legend-title { display: flex; align-items: center; gap: 7px; padding-left: 3px; height: 27px; font-size: 17.600px; font-weight: 600; letter-spacing: .5px; color: #1976d2; }
.legend-row { display: flex; gap: 20px; margin-top: 10px; }
.key { display: flex; align-items: center; gap: 10px; font-size: 17.600px; letter-spacing: .68px; color: #000; white-space: nowrap; }
.dot { width: 34px; height: 34px; border-radius: 50%; border: 2px solid; display: grid; place-items: center; }
.done { background: #4caf50; border-color: #2e7d32; }
.ongoing { background: #ff9800; border-color: #f57c00; }
.roads { background: #ff5722; border-color: #d84315; }
.water { background: #2196f3; border-color: #1976d2; }
.school { background: #9c27b0; border-color: #7b1fa2; }
.k1 { width: 176px; } .k2 { width: 153px; } .k3 { width: 122px; } .k4 { width: 129px; } .k5 { width: 136px; }
.filters { display: flex; align-items: center; gap: 20px; height: 49px; margin-top: 20px; }
select { height: 43px; border: 1px solid #bbb; border-radius: 6px; background: #fff; color: #000; padding: 0 0 0 11px; font: 16.700px "Liberation Sans", Arial, sans-serif; margin-top: 2px; }
.f-mla { width: 438px; } .f-type { width: 347px; } .f-year { width: 113px; }
.search { display: flex; align-items: center; flex: 1; }
.search input { width: 277px; height: 42px; border: 1px solid #bbb; border-right: 0; border-radius: 6px 0 0 6px; padding: 0 10px; font: 16.700px "Liberation Sans", Arial, sans-serif; margin-top: 1px; }
.search input::placeholder { color: #757575; }
.search button { width: 48px; height: 50px; background: #1976d2; border: 1px solid #bbb; border-left: 0; border-radius: 0 6px 6px 0; display: grid; place-items: center; padding-bottom: 4px; }
.map { position: relative; margin-top: 21px; height: 400px; border-radius: 12px 12px 0 0; overflow: hidden; background: #f2efe9; }
.layer path { fill: none; vector-effect: non-scaling-stroke; stroke-linejoin: round; }
.layer .minor { stroke: #c6c5c6; stroke-width: 1; }
.layer .rail { stroke: #8a8a8a; stroke-width: 1.2; }
.layer .river { stroke: #9fd0e0; stroke-width: 1.8; }
.layer .riverb { stroke: #8c9cc8; stroke-width: 1.6; }
.layer .border { stroke: #c0a3c0; stroke-width: 1.3; stroke-dasharray: 9 2 2 2; }
.layer .trunk { stroke: #f8c177; stroke-width: 2.2; }
.layer .motor { stroke: #f9917a; stroke-width: 2.7; }
.layer .lake { fill: #aad3df; }
.layer .wood { fill: #b4d8a8; }
.layer .wood2 { fill: #8dc88d; }
.layer .park { fill: #d3e0bd; }
.layer .sand { fill: #f0f2dc; }
.layer .urban { fill: #dadada; }
.labels text { font-family: "Noto Sans", sans-serif; fill: #333; paint-order: stroke; stroke: rgba(255,255,255,.75); stroke-width: 2.5px; }
.labels .town { font-size: 13px; }
.labels .city { font-size: 16.500px; }
.labels .area { font-size: 12.500px; font-style: italic; fill: #a07aa8; }
.zoom { position: absolute; left: 13.500px; top: 13px; width: 40px; height: 80px; border: 2px solid #bdbbb7; border-radius: 5px; background: #fff; overflow: hidden; }
.zoom button { display: block; width: 36px; height: 38px; background: #fff; font: bold 27px/38px "Liberation Mono", monospace; color: #000; }
.zoom button + button { border-top: 1px solid #ccc; line-height: 35px; }
.scrollbar { margin-left: auto; width: 19px; background: #2c2c2c; display: flex; flex-direction: column; align-items: center; padding: 6px 0 5px; }
.thumb { width: 11px; height: 528px; margin-top: 49px; border-radius: 6px; background: #9f9f9f; }
.down { margin-top: auto; }

/* taskbar */
.taskbar { height: 60px; flex: none; background: linear-gradient(90deg, #212121 0, #212121 25%, #22202a 48%, #22212a 65%, #212121 78%); border-top: 1px solid #484848; display: flex; align-items: center; color: #fff; font-family: "Open Sans", "Noto Sans", sans-serif; font-size: 14.500px; }
.weather { display: flex; width: 557px; padding-left: 25px; gap: 4px; }
.two { display: flex; flex-direction: column; line-height: 20px; margin-top: -3px; }
.smoke { color: #ccc; }
.temp { letter-spacing: -.3px; }
.smoke { letter-spacing: -.1px; }
.count { font: 14px "Open Sans", sans-serif; fill: #111; }
.tb-search { width: 275px; height: 40px; margin-left: 15px; border-radius: 20px; background: #3f3d43; border: 1px solid #555359; display: flex; align-items: center; padding: 0 19px 0 14px; font-size: 16px; color: #ddd; }
.tb-search span { margin-left: 11px; padding-bottom: 1px; }
.stones { margin-left: auto; }
.apps { display: flex; gap: 6px; margin-left: 6.500px; }
.apps > span { position: relative; width: 49px; height: 49px; display: grid; place-items: center; border-radius: 5px; }
.apps .current { background: #302f38; outline: 1px solid #38373f; outline-offset: -1px; }
.current::after, .running::after { content: ""; position: absolute; left: 15px; bottom: 0; width: 20px; height: 4px; border-radius: 2px; background: #f4826a; }
.running::after { left: 20px; width: 9px; background: #999; }
.vbadge { font: 12px "Open Sans", sans-serif; fill: #dde; }
.help { font: bold 26px "Open Sans", sans-serif; fill: #fff; }
.tray { margin-left: auto; padding-right: 24px; display: flex; align-items: center; }
.cloud { margin-left: 22px; }
.lang-tray { width: 44px; margin-left: 14px; align-items: center; }
.wifi { margin-left: 15px; }
.vol { margin-left: 9px; }
.bat { margin-left: 9px; }
.clock { width: 98px; align-items: flex-end; font-size: 14.700px; }
```
